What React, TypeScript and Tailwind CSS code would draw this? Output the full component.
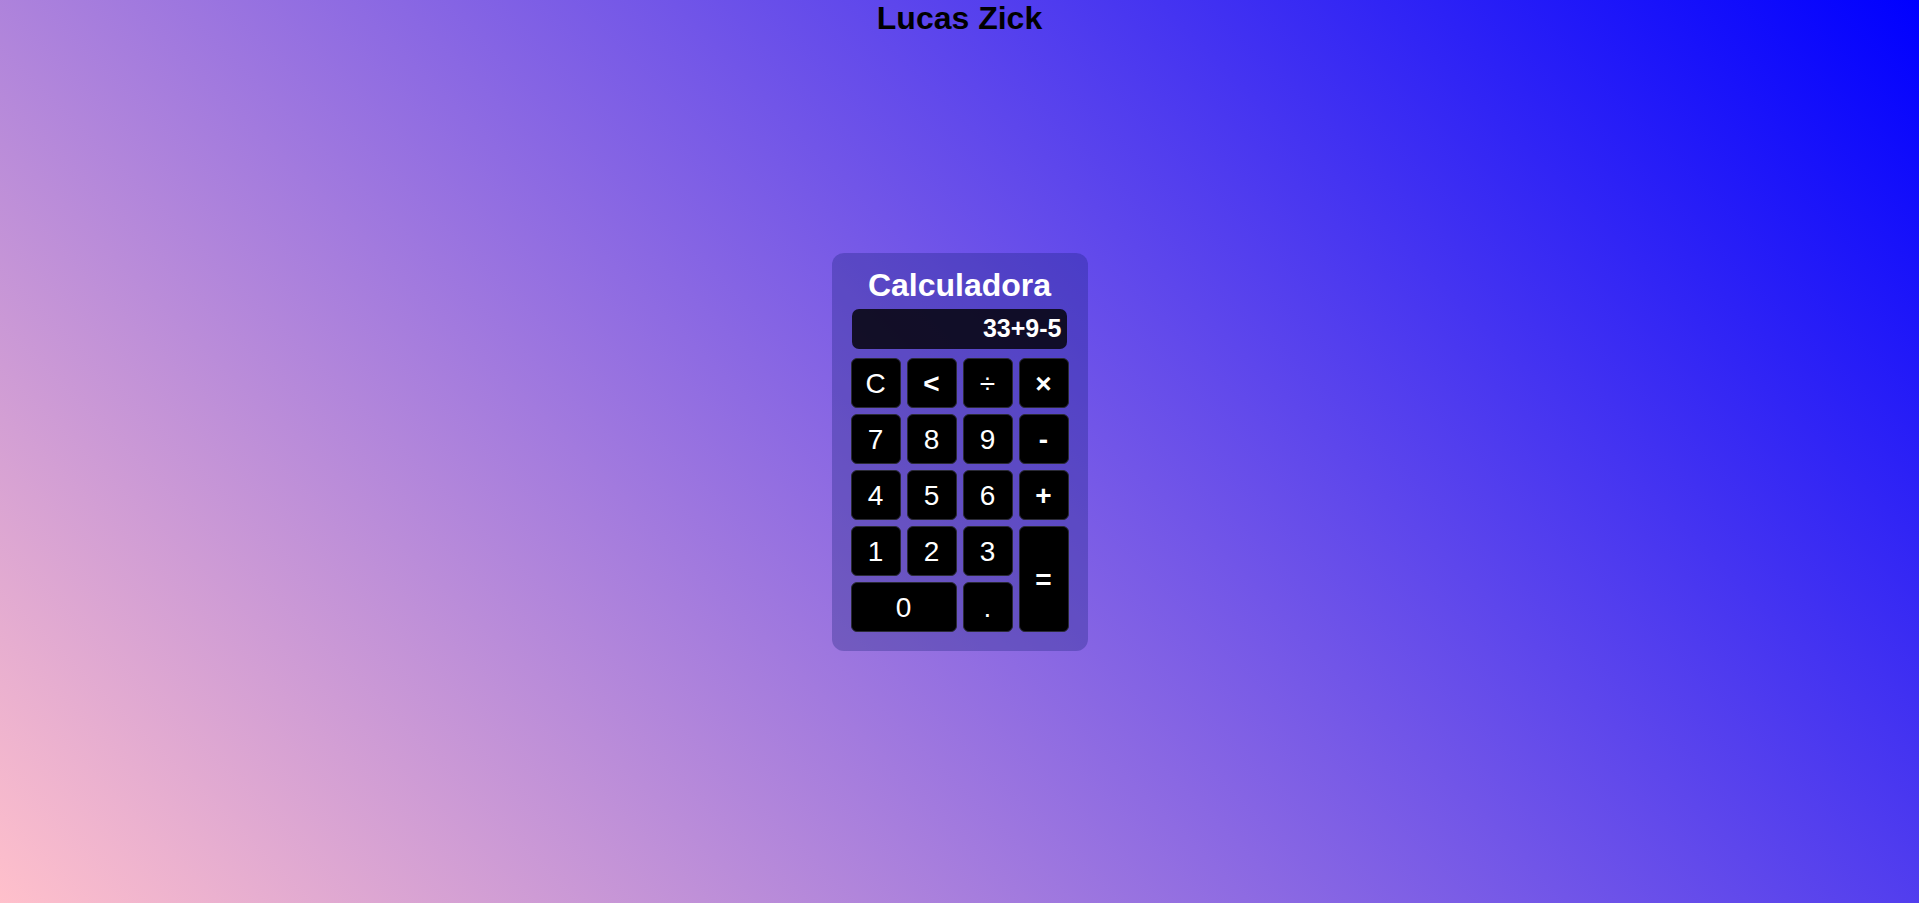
import React from "react";

type Key = { label: string; cls?: string; bold?: boolean };

const keys: Key[] = [
  { label: "C" },
  { label: "<", bold: true },
  { label: "÷" },
  { label: "×", bold: true },
  { label: "7" },
  { label: "8" },
  { label: "9" },
  { label: "-", bold: true },
  { label: "4" },
  { label: "5" },
  { label: "6" },
  { label: "+", bold: true },
  { label: "1" },
  { label: "2" },
  { label: "3" },
  { label: "=", cls: "row-span-2", bold: true },
  { label: "0", cls: "col-span-2" },
  { label: "." },
];

export default function App() {
  return (
    <div
      className="min-h-screen w-full flex flex-col bg-[linear-gradient(45deg,pink,blue)]"
      style={{ fontFamily: '"Liberation Sans", Arial, sans-serif' }}
    >
      <h1 className="m-0 text-center text-[32px] leading-[37px] font-bold text-black">
        Lucas Zick
      </h1>
      <div className="flex-1 flex items-center justify-center pb-[37px]">
        <div className="w-[256px] rounded-[12px] bg-[rgba(20,30,120,0.3)] pt-[16px] px-[19px] pb-[19px] flex flex-col">
          <h2 className="m-0 text-center text-[32px] leading-[33px] font-bold text-white">
            Calculadora
          </h2>
          <div className="mt-[7px] ml-[1px] w-[215px] h-[40px] rounded-[7px] bg-[rgba(0,0,0,0.8)] flex items-center justify-end pr-[5px] text-[25px] font-bold text-white">
            33+9-5
          </div>
          <div className="mt-[9px] grid grid-cols-[repeat(4,50px)] grid-rows-[repeat(5,50px)] gap-[6px]">
            {keys.map((k) => (
              <button
                key={k.label}
                className={`${k.cls ?? ""} bg-black text-white rounded-[6px] border border-[#2a2a36] flex items-center justify-center pt-[2px] text-[28px] leading-none ${
                  k.bold ? "font-bold" : "font-normal"
                }`}
              >
                {k.label}
              </button>
            ))}
          </div>
        </div>
      </div>
    </div>
  );
}
